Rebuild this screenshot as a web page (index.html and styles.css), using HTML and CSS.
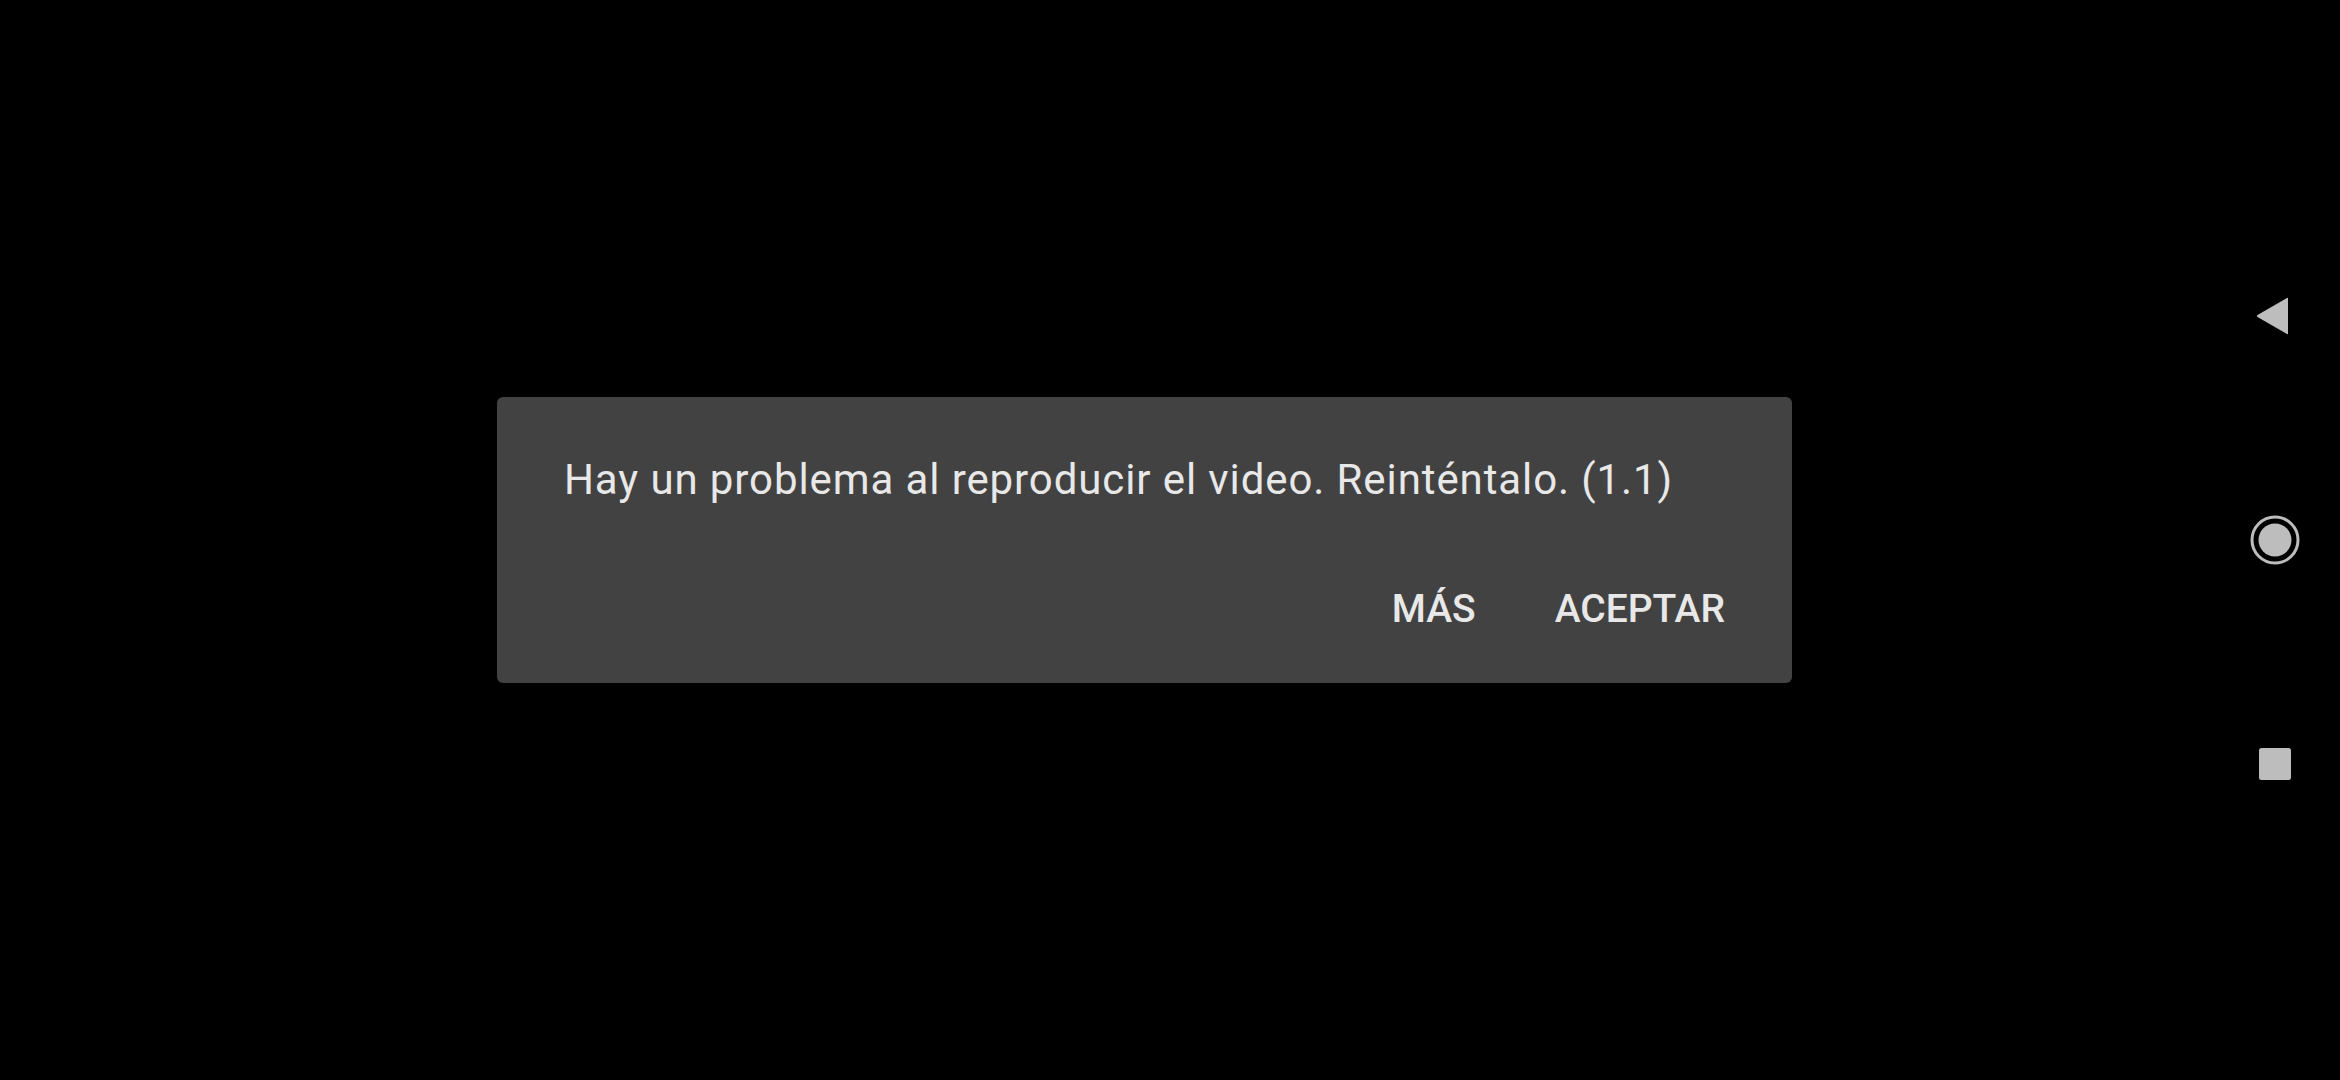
FILE: index.html
```html
<!DOCTYPE html>
<html lang="es">
<head>
    <meta charset="UTF-8">
    <meta name="viewport" content="width=device-width, initial-scale=1.0">
    <title>Video</title>
    <link rel="stylesheet" href="styles.css">
</head>
<body>
    <div class="screen">
        <main class="player">
            <div class="dialog">
                <p class="message">Hay un problema al reproducir el video. Reinténtalo. (1.1)</p>
                <div class="actions">
                    <button class="btn">MÁS</button>
                    <button class="btn">ACEPTAR</button>
                </div>
            </div>
        </main>

        <nav class="navbar">
            <svg class="nav-icon" width="40" height="40" viewBox="0 0 40 40">
                <path d="M35 2.5 L35 37.5 Q35 38.5 34 38 L4.5 21 Q3 20 4.5 19 L34 2 Q35 1.5 35 2.5 Z" fill="#bdbdbd"/>
            </svg>
            <svg class="nav-icon" width="52" height="52" viewBox="0 0 52 52">
                <circle cx="26" cy="26" r="23" fill="none" stroke="#bdbdbd" stroke-width="3"/>
                <circle cx="26" cy="26" r="16.5" fill="#bdbdbd"/>
            </svg>
            <svg class="nav-icon" width="40" height="40" viewBox="0 0 40 40">
                <rect x="4" y="4" width="32" height="32" rx="2.5" fill="#bdbdbd"/>
            </svg>
        </nav>
    </div>
</body>
</html>
```

FILE: styles.css
```css
* {
    box-sizing: border-box;
}

html, body {
    margin: 0;
    padding: 0;
    background: #000;
}

.screen {
    display: flex;
    width: 2340px;
    height: 1080px;
    background: #000;
    font-family: Roboto, "Noto Sans", sans-serif;
}

.player {
    flex: 1;
    display: flex;
    align-items: center;
    padding-left: 497px;
}

.dialog {
    width: 1295px;
    height: 286px;
    background: #424242;
    border-radius: 6px;
    padding: 55px 67px 0 67px;
}

.message {
    margin: 0;
    font-size: 42px;
    line-height: 56px;
    letter-spacing: 0.9px;
    color: #e8e8e8;
}

.actions {
    display: flex;
    justify-content: flex-end;
    gap: 79px;
    margin-top: 77px;
}

.btn {
    background: none;
    border: none;
    padding: 0;
    font-family: Roboto, "Noto Sans", sans-serif;
    font-weight: 500;
    font-size: 39px;
    line-height: 48px;
    color: #e8e8e8;
    cursor: pointer;
}

.navbar {
    width: 130px;
    display: flex;
    flex-direction: column;
    align-items: center;
    padding-top: 296px;
}

.nav-icon {
    display: block;
}

.nav-icon:nth-child(1) {
    margin-left: -4px;
}

.nav-icon:nth-child(2) {
    margin-top: 178px;
}

.nav-icon:nth-child(3) {
    margin-top: 178px;
}
```
